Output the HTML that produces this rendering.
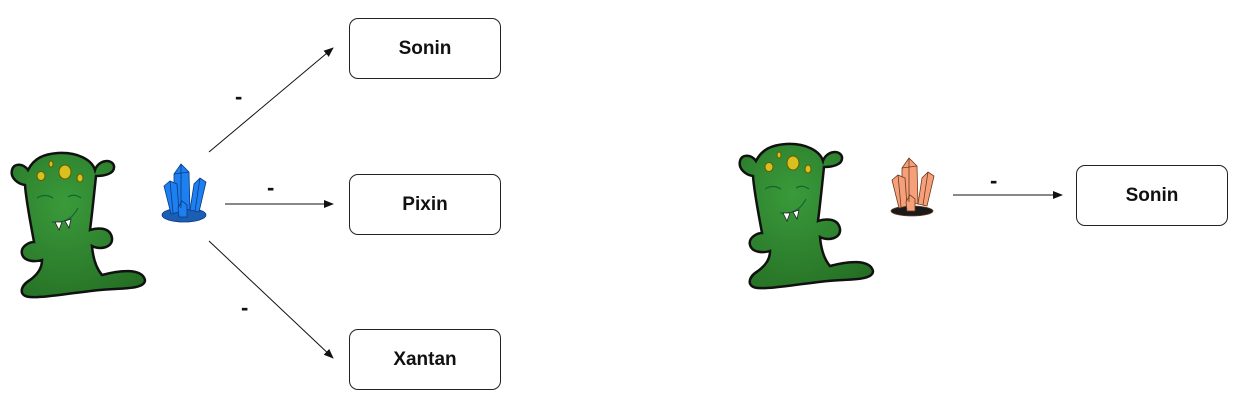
<!DOCTYPE html>
<html><head><meta charset="utf-8"><style>
html,body{margin:0;padding:0;background:#fff;}
body{width:1237px;height:407px;position:relative;overflow:hidden;font-family:"Liberation Sans",sans-serif;}
.box{position:absolute;width:152px;height:61px;border:1.5px solid #222;border-radius:9px;box-sizing:border-box;display:flex;align-items:center;justify-content:center;font-weight:bold;font-size:19px;color:#111;}
.d{position:absolute;font-weight:bold;font-size:22px;color:#111;}
</style></head><body>
<svg width="1237" height="407" style="position:absolute;left:0;top:0">
<defs>
<marker id="a" markerWidth="10" markerHeight="8" refX="9" refY="4" orient="auto" markerUnits="userSpaceOnUse"><path d="M0,0 L10,4 L0,8 Z" fill="#111"/></marker>
<radialGradient id="g" cx="0.4" cy="0.35" r="0.8"><stop offset="0" stop-color="#3a9a3a"/><stop offset="1" stop-color="#246d24"/></radialGradient>
<g id="m">
<path d="M48,3 C68,2 82,10 85,20 C88,10 102,8 104,16 C105,24 94,26 86,26 C84,45 82,65 80,80 C86,78 100,76 102,88 C103,98 90,100 82,96 C83,108 86,118 92,125 C110,120 132,118 135,130 C135,140 110,138 90,140 C60,143 35,148 20,147 C8,146 10,136 20,130 C28,124 32,118 32,110 C26,112 14,112 12,104 C10,96 20,92 24,92 C20,70 16,50 15,35 C8,34 0,28 2,20 C4,12 14,14 18,20 C24,8 34,4 48,3 Z" fill="url(#g)" stroke="#111" stroke-width="2.5"/>
<ellipse cx="55" cy="22" rx="6" ry="7" fill="#d8c020" stroke="#6a5a00"/>
<ellipse cx="31" cy="26" rx="4" ry="4.5" fill="#d8c020" stroke="#6a5a00"/>
<ellipse cx="70" cy="28" rx="3" ry="4" fill="#d8c020" stroke="#6a5a00"/>
<ellipse cx="41" cy="14" rx="2" ry="3" fill="#d8c020" stroke="#6a5a00"/>
<path d="M27,48 Q35,43 43,48 M58,47 Q64,43 71,48 M42,72 Q60,74 68,58" fill="none" stroke="#163" stroke-width="1.2"/>
<path d="M45,72 L49,80 L52,72 Z M55,71 L59,78 L61,69 Z" fill="#fff" stroke="#222" stroke-width="0.8"/>
</g>
</defs>
<use href="#m" x="10" y="150"/>
<use href="#m" x="738" y="141"/>
<g transform="translate(162,164)" stroke="#0a3a80" stroke-width="0.8">
<ellipse cx="22" cy="51" rx="22" ry="7" fill="#1a5fb4"/>
<polygon points="12,42 12,10 19,0 27,8 28,46" fill="#1d7ff0"/>
<polygon points="2,22 8,17 15,20 17,48 9,50" fill="#1d7ff0"/>
<polygon points="28,46 32,20 38,14 44,18 37,48" fill="#1d7ff0"/>
<polygon points="16,44 20,37 25,41 25,53 17,53" fill="#1d7ff0"/>
<path d="M19,0 L19,44 M12,10 L27,8 M8,17 L11,49 M38,14 L33,47" fill="none"/>
</g>
<g transform="translate(890,158)" stroke="#6a3a20" stroke-width="0.8">
<ellipse cx="22" cy="53" rx="21" ry="5" fill="#1a1a1a"/>
<polygon points="12,42 12,10 19,0 27,8 28,46" fill="#f6a07a"/>
<polygon points="2,22 8,17 15,20 17,48 9,50" fill="#f6a07a"/>
<polygon points="28,46 32,20 38,14 44,18 37,48" fill="#f6a07a"/>
<polygon points="16,44 20,37 25,41 25,53 17,53" fill="#f6a07a"/>
<path d="M19,0 L19,44 M12,10 L27,8 M8,17 L11,49 M38,14 L33,47" fill="none"/>
</g>
<g stroke="#111" stroke-width="1">
<line x1="209" y1="152" x2="333" y2="48" marker-end="url(#a)"/>
<line x1="225" y1="204" x2="333" y2="204" marker-end="url(#a)"/>
<line x1="209" y1="241" x2="333" y2="358" marker-end="url(#a)"/>
<line x1="953" y1="195" x2="1062" y2="195" marker-end="url(#a)"/>
</g>
</svg>
<div class="box" style="left:349px;top:18px">Sonin</div>
<div class="box" style="left:349px;top:174px">Pixin</div>
<div class="box" style="left:349px;top:329px">Xantan</div>
<div class="box" style="left:1076px;top:165px">Sonin</div>
<div class="d" style="left:235px;top:84px">-</div>
<div class="d" style="left:267px;top:175px">-</div>
<div class="d" style="left:241px;top:295px">-</div>
<div class="d" style="left:990px;top:168px">-</div>
</body></html>
